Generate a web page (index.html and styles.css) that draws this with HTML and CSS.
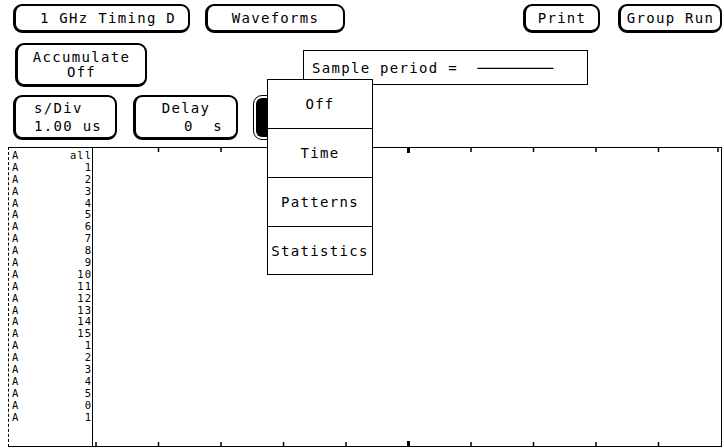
FILE: index.html
```html
<!DOCTYPE html>
<html>
<head>
<meta charset="utf-8">
<link rel="stylesheet" href="styles.css">
</head>
<body>
<div class="screen">
  <div class="row row-top">
    <div class="btn btn-mod">1 GHz Timing D</div>
    <div class="btn btn-wave">Waveforms</div>
    <div class="spacer"></div>
    <div class="btn btn-print">Print</div>
    <div class="btn btn-run">Group Run</div>
  </div>
  <div class="row row-mid">
    <div class="btn btn-acc"><span>Accumulate</span><span>Off</span></div>
    <div class="sample">Sample period =  <span class="dash">─────────</span></div>
  </div>
  <div class="row row-ctl">
    <div class="btn btn-sdiv"><span>s/Div</span><span>1.00 us</span></div>
    <div class="btn btn-delay"><span class="c">Delay</span><span class="r">0&nbsp;&nbsp;s</span></div>
    <div class="btn btn-sel"></div>
  </div>
  <div class="plot">
    <div class="labels">
      <div class="lab"><span>A</span><span>all</span></div>
      <div class="lab"><span>A</span><span>1</span></div>
      <div class="lab"><span>A</span><span>2</span></div>
      <div class="lab"><span>A</span><span>3</span></div>
      <div class="lab"><span>A</span><span>4</span></div>
      <div class="lab"><span>A</span><span>5</span></div>
      <div class="lab"><span>A</span><span>6</span></div>
      <div class="lab"><span>A</span><span>7</span></div>
      <div class="lab"><span>A</span><span>8</span></div>
      <div class="lab"><span>A</span><span>9</span></div>
      <div class="lab"><span>A</span><span>10</span></div>
      <div class="lab"><span>A</span><span>11</span></div>
      <div class="lab"><span>A</span><span>12</span></div>
      <div class="lab"><span>A</span><span>13</span></div>
      <div class="lab"><span>A</span><span>14</span></div>
      <div class="lab"><span>A</span><span>15</span></div>
      <div class="lab"><span>A</span><span>1</span></div>
      <div class="lab"><span>A</span><span>2</span></div>
      <div class="lab"><span>A</span><span>3</span></div>
      <div class="lab"><span>A</span><span>4</span></div>
      <div class="lab"><span>A</span><span>5</span></div>
      <div class="lab"><span>A</span><span>0</span></div>
      <div class="lab"><span>A</span><span>1</span></div>
    </div>
    <div class="wave">
      <svg class="ticks" width="628" height="298" viewBox="0 0 628 298">
        <g stroke="#000" stroke-width="1.5">
          <line x1="65.5" y1="0" x2="65.5" y2="4"/>
          <line x1="128" y1="0" x2="128" y2="4"/>
          <line x1="190.5" y1="0" x2="190.5" y2="4"/>
          <line x1="253" y1="0" x2="253" y2="4"/>
          <line x1="315.5" y1="0" x2="315.5" y2="5" stroke-width="3"/>
          <line x1="378" y1="0" x2="378" y2="4"/>
          <line x1="440.5" y1="0" x2="440.5" y2="4"/>
          <line x1="503" y1="0" x2="503" y2="4"/>
          <line x1="565.5" y1="0" x2="565.5" y2="4"/>
          <line x1="625" y1="0" x2="625" y2="4"/>
          <line x1="65.5" y1="294" x2="65.5" y2="298"/>
          <line x1="128" y1="294" x2="128" y2="298"/>
          <line x1="190.5" y1="294" x2="190.5" y2="298"/>
          <line x1="253" y1="294" x2="253" y2="298"/>
          <line x1="315.5" y1="293" x2="315.5" y2="298" stroke-width="3"/>
          <line x1="378" y1="294" x2="378" y2="298"/>
          <line x1="440.5" y1="294" x2="440.5" y2="298"/>
          <line x1="503" y1="294" x2="503" y2="298"/>
          <line x1="565.5" y1="294" x2="565.5" y2="298"/>
          <line x1="3" y1="294" x2="3" y2="298"/>
        </g>
      </svg>
    </div>
  </div>
  <div class="menu">
    <div class="item">Off</div>
    <div class="item">Time</div>
    <div class="item">Patterns</div>
    <div class="item">Statistics</div>
  </div>
</div>
</body>
</html>
```
FILE: styles.css
```css
* { box-sizing: border-box; }
html, body { margin: 0; padding: 0; background: #fff; }
body {
  width: 724px;
  height: 448px;
  overflow: hidden;
  font-family: "DejaVu Sans Mono", "Liberation Mono", monospace;
  font-size: 14px;
  letter-spacing: 1.3px;
  color: #000;
}
.screen {
  position: relative;
  width: 724px;
  height: 448px;
  padding-top: 4px;
  display: flex;
  flex-direction: column;
}
.row { display: flex; align-items: flex-start; }
.row-top { height: 29px; }
.row-mid { height: 44px; margin-top: 10px; }
.row-ctl { height: 45px; margin-top: 8px; }
.spacer { flex: 1; }

.btn {
  height: 100%;
  border: 2px solid #000;
  border-left-width: 3px;
  border-bottom-width: 3px;
  border-radius: 9px;
  display: flex;
  align-items: center;
  justify-content: center;
  white-space: pre;
  background: #fff;
}
.btn-mod { margin-left: 13px; width: 177px; padding-left: 12px; }
.btn-wave { margin-left: 15px; width: 140px; }
.btn-print { width: 77px; }
.btn-run { margin-left: 18px; margin-right: 2px; width: 104px; }

.btn-acc {
  margin-left: 15px;
  width: 132px;
  flex-direction: column;
  line-height: 15px;
}
.sample {
  margin-left: 156px;
  margin-top: 7px;
  width: 285px;
  height: 35px;
  border: 1.5px solid #000;
  display: flex;
  align-items: center;
  padding-left: 8px;
  white-space: pre;
}
.dash { letter-spacing: 0; }

.btn-sdiv {
  margin-left: 13px;
  width: 104px;
  flex-direction: column;
  align-items: flex-start;
  padding-left: 18px;
  line-height: 18px;
}
.btn-delay {
  margin-left: 16px;
  width: 105px;
  flex-direction: column;
  align-items: stretch;
  line-height: 18px;
}
.btn-delay .c { text-align: center; }
.btn-delay .r { text-align: right; padding-right: 13px; }
.btn-sel {
  margin-left: 15px;
  width: 100px;
  border: 1px solid #000;
  padding: 2px;
  background: #000;
  background-clip: content-box;
}

.plot {
  margin-top: 7px;
  margin-left: 8px;
  width: 714px;
  height: 300px;
  border-top: 1.5px solid #000;
  border-bottom: 1.5px solid #000;
  border-left: 1.5px dashed #000;
  border-right: 1.5px solid #000;
  display: flex;
}
.labels {
  width: 84px;
  border-right: 1.5px solid #000;
  padding: 2px 0 0 3px;
  font-size: 10.5px;
  letter-spacing: 1px;
  display: flex;
  flex-direction: column;
}
.lab {
  height: 11.9px;
  line-height: 11.9px;
  display: flex;
  justify-content: space-between;
}
.wave { flex: 1; position: relative; }
.ticks { position: absolute; left: 0; top: 0; }

.menu {
  position: absolute;
  left: 267px;
  top: 79px;
  width: 106px;
  border: 1.5px solid #000;
  background: #fff;
  display: flex;
  flex-direction: column;
}
.item {
  height: 49px;
  display: flex;
  align-items: center;
  justify-content: center;
  border-bottom: 1.5px solid #000;
}
.item:last-child { border-bottom: none; height: 47px; }
```
